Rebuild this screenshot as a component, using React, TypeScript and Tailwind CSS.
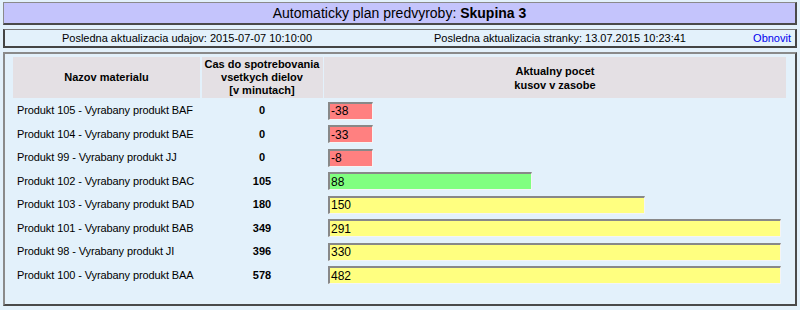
import React from 'react';

type Row = { name: string; time: number; stock: number; width: number; color: string };

const ROWS: Row[] = [
  { name: 'Produkt 105 - Vyrabany produkt BAF', time: 0, stock: -38, width: 45, color: 'bg-[#ff8080]' },
  { name: 'Produkt 104 - Vyrabany produkt BAE', time: 0, stock: -33, width: 45, color: 'bg-[#ff8080]' },
  { name: 'Produkt 99 - Vyrabany produkt JJ', time: 0, stock: -8, width: 45, color: 'bg-[#ff8080]' },
  { name: 'Produkt 102 - Vyrabany produkt BAC', time: 105, stock: 88, width: 204, color: 'bg-[#80ff80]' },
  { name: 'Produkt 103 - Vyrabany produkt BAD', time: 180, stock: 150, width: 317, color: 'bg-[#ffff80]' },
  { name: 'Produkt 101 - Vyrabany produkt BAB', time: 349, stock: 291, width: 453, color: 'bg-[#ffff80]' },
  { name: 'Produkt 98 - Vyrabany produkt JI', time: 396, stock: 330, width: 453, color: 'bg-[#ffff80]' },
  { name: 'Produkt 100 - Vyrabany produkt BAA', time: 578, stock: 482, width: 453, color: 'bg-[#ffff80]' },
];

const App: React.FC = () => {
  return (
    <div className="w-[800px] h-[310px] bg-[#e3f1fb] px-[3px] pt-[2px] flex flex-col gap-[4px] text-[11px] text-black font-['Liberation_Sans',Arial,sans-serif]">
      {/* Title */}
      <div className="h-[23px] bg-[#c4c4fc] border border-[#8a8a8a] border-b-2 border-b-[#4a4a4a] border-r-2 border-r-[#4a4a4a] flex items-center justify-center text-[14px]">
        <span>
          Automaticky plan predvyroby: <b>Skupina 3</b>
        </span>
      </div>

      {/* Info bar */}
      <div className="h-[19px] bg-[#e3f1fb] border border-[#777] border-l-2 border-l-[#444] border-b-2 border-b-[#444] border-r-2 border-r-[#444] grid grid-cols-[370px_370px_1fr] items-center">
        <div className="text-center pr-[6px]">Posledna aktualizacia udajov: 2015-07-07 10:10:00</div>
        <div className="text-center">Posledna aktualizacia stranky: 13.07.2015 10:23:41</div>
        <div className="text-right pr-[4px] text-[#0000ee]">Obnovit</div>
      </div>

      {/* Main panel */}
      <div className="h-[254px] border-2 border-[#8a8a8a] border-r-[#4a4a4a] border-b-[#4a4a4a] pl-[8px] pr-[9px] pt-[3px]">
        <div className="grid grid-cols-[187px_121px_1fr] gap-x-[1.5px] gap-y-[1.5px]">
          <div className="h-[41px] bg-[#e4e0e4] font-bold flex items-center justify-center text-center leading-[13px]">
            Nazov materialu
          </div>
          <div className="h-[41px] bg-[#e4e0e4] font-bold flex items-center justify-center text-center leading-[13px]">
            Cas do spotrebovania
            <br />
            vsetkych dielov
            <br />
            [v minutach]
          </div>
          <div className="h-[41px] bg-[#e4e0e4] font-bold flex items-center justify-center text-center leading-[14px]">
            Aktualny pocet
            <br />
            kusov v zasobe
          </div>

          {ROWS.map((r) => (
            <React.Fragment key={r.name}>
              <div className="h-[22px] flex items-center pl-[4px] tracking-[-0.1px]">{r.name}</div>
              <div className="h-[22px] flex items-center justify-center font-bold">{r.time}</div>
              <div className="h-[22px] flex items-center pl-[4px]">
                <div
                  className={`h-[18px] ${r.color} border-t-2 border-l-2 border-[#888] border-b border-r border-b-[#f4f4f4] border-r-[#f4f4f4] flex items-center pl-[1px] text-[12px]`}
                  style={{ width: r.width }}
                >
                  {r.stock}
                </div>
              </div>
            </React.Fragment>
          ))}
        </div>
      </div>
    </div>
  );
};

export default App;
